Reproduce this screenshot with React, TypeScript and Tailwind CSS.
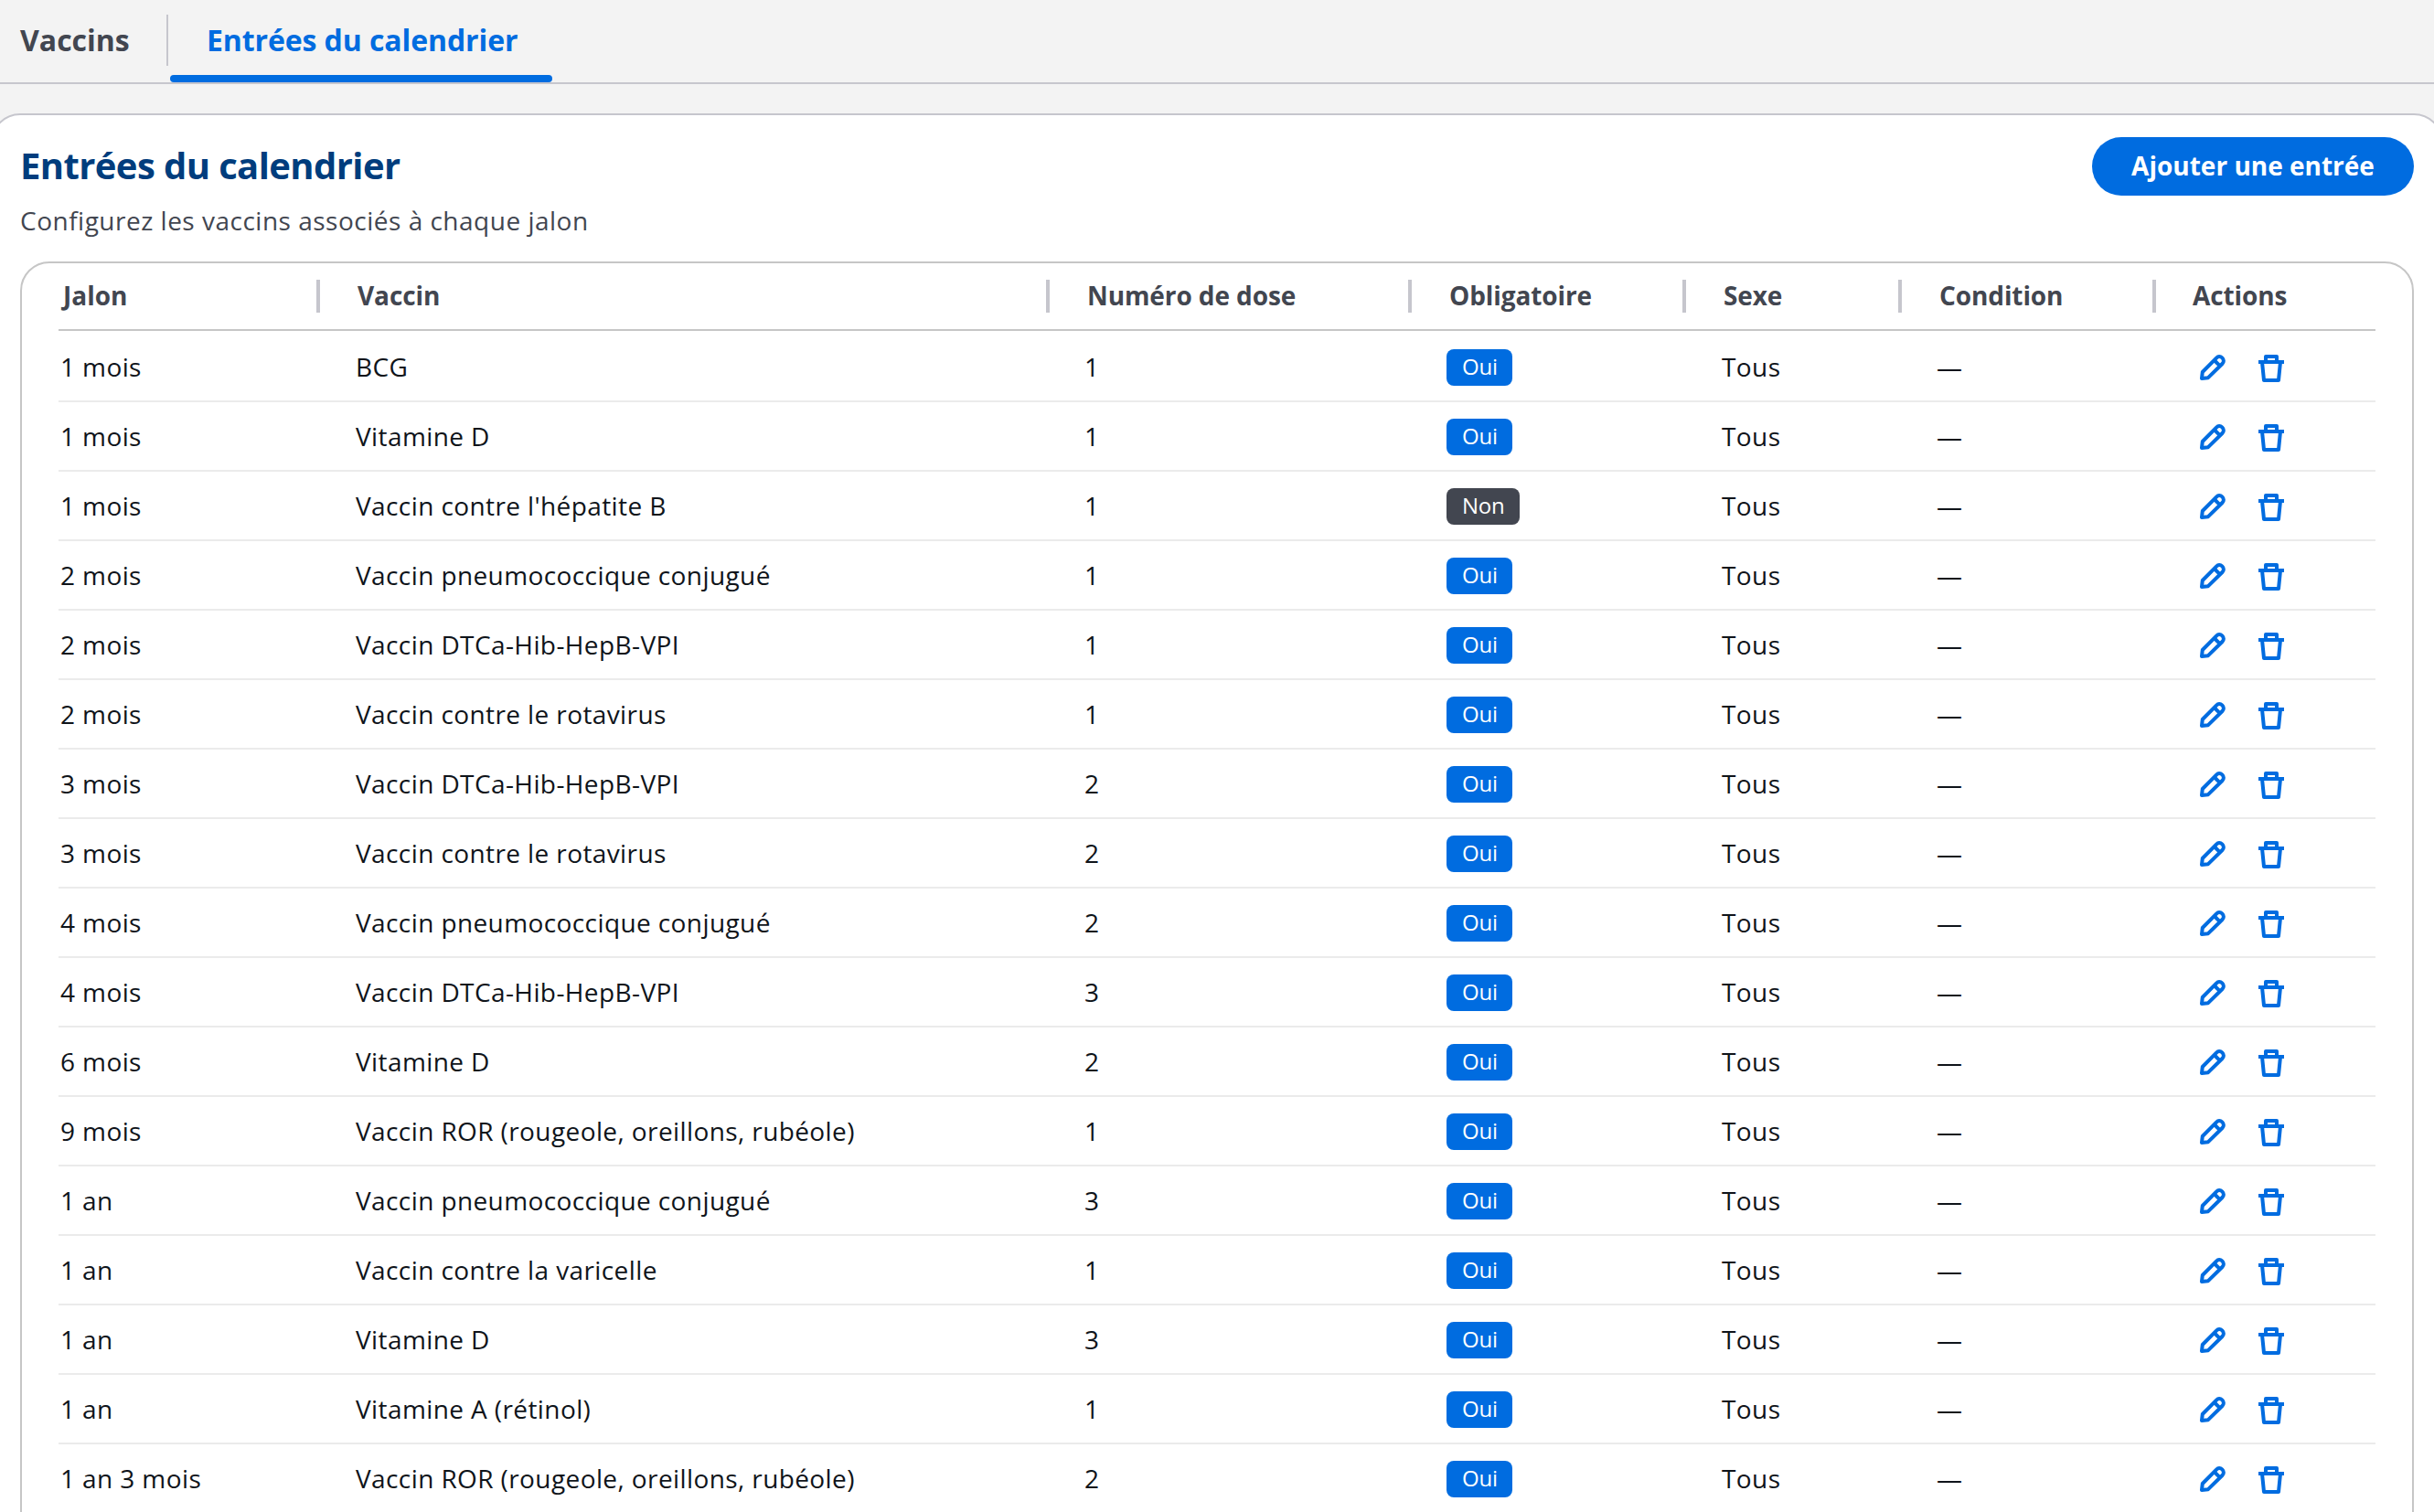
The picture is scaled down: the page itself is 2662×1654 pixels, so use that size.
const entries = [
  { jalon: "1 mois", vaccin: "BCG", dose: 1, required: true },
  { jalon: "1 mois", vaccin: "Vitamine D", dose: 1, required: true },
  { jalon: "1 mois", vaccin: "Vaccin contre l'hépatite B", dose: 1, required: false },
  { jalon: "2 mois", vaccin: "Vaccin pneumococcique conjugué", dose: 1, required: true },
  { jalon: "2 mois", vaccin: "Vaccin DTCa-Hib-HepB-VPI", dose: 1, required: true },
  { jalon: "2 mois", vaccin: "Vaccin contre le rotavirus", dose: 1, required: true },
  { jalon: "3 mois", vaccin: "Vaccin DTCa-Hib-HepB-VPI", dose: 2, required: true },
  { jalon: "3 mois", vaccin: "Vaccin contre le rotavirus", dose: 2, required: true },
  { jalon: "4 mois", vaccin: "Vaccin pneumococcique conjugué", dose: 2, required: true },
  { jalon: "4 mois", vaccin: "Vaccin DTCa-Hib-HepB-VPI", dose: 3, required: true },
  { jalon: "6 mois", vaccin: "Vitamine D", dose: 2, required: true },
  { jalon: "9 mois", vaccin: "Vaccin ROR (rougeole, oreillons, rubéole)", dose: 1, required: true },
  { jalon: "1 an", vaccin: "Vaccin pneumococcique conjugué", dose: 3, required: true },
  { jalon: "1 an", vaccin: "Vaccin contre la varicelle", dose: 1, required: true },
  { jalon: "1 an", vaccin: "Vitamine D", dose: 3, required: true },
  { jalon: "1 an", vaccin: "Vitamine A (rétinol)", dose: 1, required: true },
  { jalon: "1 an 3 mois", vaccin: "Vaccin ROR (rougeole, oreillons, rubéole)", dose: 2, required: true },
];

const columns = ["Vaccin", "Numéro de dose", "Obligatoire", "Sexe", "Condition", "Actions"];

const rowGrid = "grid grid-cols-[286px_798px_396px_300px_236px_278px_240px] items-center";

const PencilIcon = () => (
  <svg className="size-8" viewBox="0 0 32 32" fill="none" stroke="currentColor" strokeWidth="4" strokeLinejoin="round">
    <path d="M4 28 L4.8 21 L20 5.6 C21.9 3.6 24.3 3.5 26.3 5.4 C28.4 7.4 28.4 10 26.4 12 L11 27.2 Z" />
    <path d="M17.6 8 L24 14.4" />
  </svg>
);

const TrashIcon = () => (
  <svg className="size-8" viewBox="0 0 32 32" fill="none" stroke="currentColor" strokeWidth="4" strokeLinejoin="round">
    <path d="M2 10 H30" />
    <path d="M10 10 V4 H22 V10" />
    <path d="M6 10 L8 30 H24 L26 10" />
  </svg>
);

const Badge = ({ required }: { required: boolean }) => (
  <span
    className={`flex h-10 items-center rounded-lg pr-4 pl-[17px] pb-[3px] text-2xl tracking-[-0.2px] text-white ${
      required ? "bg-[#006ce0]" : "bg-[#424650]"
    }`}
  >
    {required ? "Oui" : "Non"}
  </span>
);

const App = () => {
  return (
    <div className="h-[1654px] w-[2662px] overflow-hidden bg-[#f3f3f3] font-['Open_Sans',sans-serif] text-[#0f141a]">
      <nav className="flex h-[92px] border-b-2 border-[#c6c6cd] text-[32px] font-bold">
        <div className="flex w-[184px] pt-4">
          <button className="h-14 w-full border-r-2 border-[#c6c6cd] pl-[22px] text-left text-[#424650]">Vaccins</button>
        </div>
        <div className="ml-0.5 flex w-[418px] flex-col">
          <button className="mt-4 h-14 pl-10 text-left tracking-[-0.1px] whitespace-nowrap text-[#006ce0]">
            Entrées du calendrier
          </button>
          <div className="mt-2.5 h-2 rounded bg-[#006ce0]" />
        </div>
      </nav>

      <main className="-mx-[10px] mt-8 h-[1600px] rounded-t-[32px] border-2 border-[#c6c6cd] bg-white px-[30px]">
        <div className="flex items-start justify-between pt-6">
          <div>
            <h1 className="pt-px text-[40px] leading-[60px] font-bold tracking-[-0.6px] text-[#003d7d]">
              Entrées du calendrier
            </h1>
            <p className="mt-2.5 text-[28px] leading-10 tracking-[0.5px] text-[#424650]">
              Configurez les vaccins associés à chaque jalon
            </p>
          </div>
          <button className="h-16 w-[352px] rounded-full bg-[#006ce0] pb-0.5 text-[28px] font-bold text-white">
            Ajouter une entrée
          </button>
        </div>

        <section className="mt-[25px] h-[1500px] rounded-t-[32px] border-2 border-[#c6c6c6] px-10">
          <div className={`${rowGrid} h-[74px] border-b-2 border-[#c6c6c6] text-[28px] font-bold text-[#424650]`}>
            <div className="flex h-9 items-center border-r-4 border-[#c6c6cd] pb-0.5 pl-[5px]">Jalon</div>
            {columns.map((name) => (
              <div
                key={name}
                className="flex h-9 items-center border-r-4 border-[#c6c6cd] pb-0.5 pl-[41px] tracking-[-0.1px] last:border-r-0 last:pl-10"
              >
                {name}
              </div>
            ))}
          </div>

          {entries.map((entry, i) => (
            <div
              key={i}
              className={`${rowGrid} border-b-2 border-[#ebebeb] text-[28px] tracking-[0.4px] ${
                i === 0 ? "h-[78px] pt-1" : "h-[76px] pt-0.5"
              }`}
            >
              <div className="pb-0.5 pl-0.5">{entry.jalon}</div>
              <div className="pb-0.5 pl-[39px]">{entry.vaccin}</div>
              <div className="pb-0.5 pl-[38px]">{entry.dose}</div>
              <div className="flex pl-[38px]">
                <Badge required={entry.required} />
              </div>
              <div className="pb-0.5 pl-[39px]">Tous</div>
              <div className="pb-0.5 pl-[38px]">—</div>
              <div className="flex gap-8 pl-[46px] text-[#006ce0]">
                <PencilIcon />
                <TrashIcon />
              </div>
            </div>
          ))}
        </section>
      </main>
    </div>
  );
};

export default App;
